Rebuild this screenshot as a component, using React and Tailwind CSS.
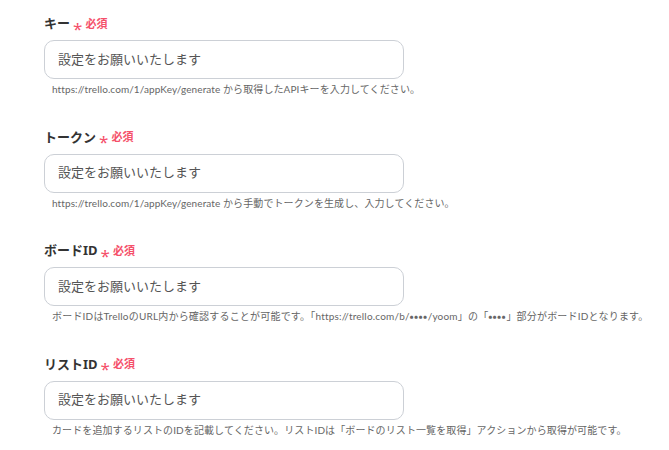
const Dots = () => <span className="align-[1px] text-[6.5px] tracking-[0.6px]">●●●●</span>

const fields = [
  {
    label: 'キー',
    help: 'https://trello.com/1/appKey/generate から取得したAPIキーを入力してください。',
  },
  {
    label: 'トークン',
    help: 'https://trello.com/1/appKey/generate から手動でトークンを生成し、入力してください。',
  },
  {
    label: 'ボードID',
    wide: true,
    help: (
      <>
        ボードIDはTrelloのURL内から確認することが可能です。「https://trello.com/b/<Dots />/yoom」の「<Dots />」部分がボードIDとなります。
      </>
    ),
  },
  {
    label: 'リストID',
    help: 'カードを追加するリストのIDを記載してください。リストIDは「ボードのリスト一覧を取得」アクションから取得が可能です。',
  },
]

export default function App() {
  return (
    <div
      className="h-[450px] w-[669px] overflow-hidden bg-white pl-[44px] pt-[13px]"
      style={{ fontFamily: '"Noto Sans", "Noto Sans CJK JP", sans-serif' }}
    >
      {fields.map((f) => (
        <Field key={f.label} label={f.label} help={f.help} wide={f.wide} />
      ))}
    </div>
  )
}

function Field({ label, help, wide }) {
  return (
    <div className="h-[113.5px]">
      <div className="flex h-[22px] items-center">
        <span className="text-[13px] font-bold text-[#333]">{label}</span>
        <span className="ml-[3px] mt-[8px] text-[17px] leading-none text-[#f5506a]">*</span>
        <span className="ml-[3px] text-[11px] font-bold text-[#f5506a]">必須</span>
      </div>
      <div className="mt-[5px] flex h-[39px] w-[360px] items-center rounded-[10px] border border-[#ccd0d6] px-[13px]">
        <span className="text-[13px] text-[#555]">設定をお願いいたします</span>
      </div>
      <p
        className={
          wide
            ? 'mt-[3px] whitespace-nowrap pl-[8px] text-[10px] leading-[14px] tracking-[0.2px] text-[#666]'
            : 'mt-[3px] whitespace-nowrap pl-[8px] text-[10px] leading-[14px] tracking-[0.1px] text-[#666]'
        }
        style={{ fontFamily: 'Lato, "Noto Sans CJK JP", sans-serif' }}
      >
        {help}
      </p>
    </div>
  )
}
